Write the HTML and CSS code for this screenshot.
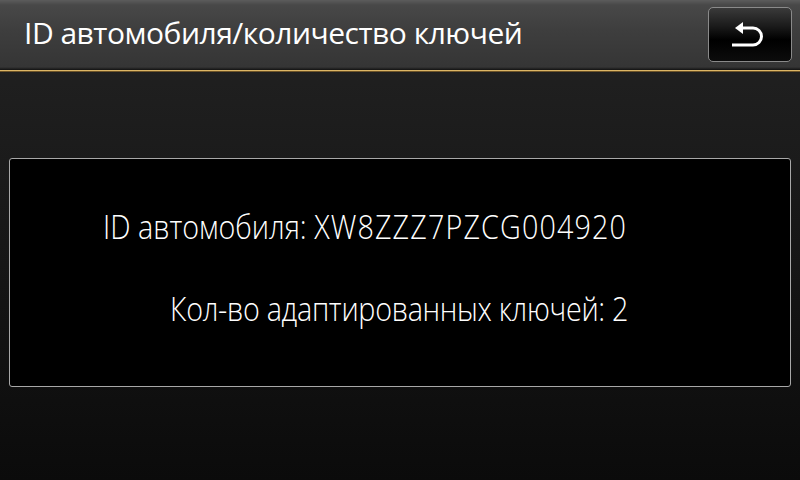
FILE: index.html
```html
<!DOCTYPE html>
<html lang="ru">
<head>
<meta charset="utf-8">
<link rel="stylesheet" href="styles.css">
</head>
<body>
<div class="screen">
  <header class="header">
    <h1 class="title">ID автомобиля/количество ключей</h1>
    <button class="back" type="button" aria-label="Назад">
      <svg width="40" height="26" viewBox="0 0 40 26">
        <path d="M10 6 H22 A8.5 8.5 0 0 1 22 23 H1" fill="none" stroke="#fff" stroke-width="3"/>
        <path d="M4 6 L12 0 L12 12 Z" fill="#fff"/>
      </svg>
    </button>
  </header>
  <div class="rule"></div>
  <main class="content">
    <section class="panel">
      <p class="line line-id"><span class="narrow">ID автомобиля: <span class="code">XW8ZZZ7PZCG004920</span></span></p>
      <p class="line line-keys"><span class="narrow keys">Кол-во адаптированных ключей: 2</span></p>
    </section>
  </main>
</div>
</body>
</html>
```
FILE: styles.css
```css
html, body {
  margin: 0;
  padding: 0;
  width: 800px;
  height: 480px;
  overflow: hidden;
  background: #0b0b0b;
}
.screen {
  width: 800px;
  height: 480px;
  display: flex;
  flex-direction: column;
  font-family: "Open Sans", "Liberation Sans", sans-serif;
  color: #fff;
  background: linear-gradient(to bottom, #232323 0%, #161616 55%, #0b0b0b 100%);
}
.header {
  height: 70px;
  box-sizing: border-box;
  display: flex;
  align-items: flex-start;
  justify-content: space-between;
  padding: 7px 8px 0 24px;
  background: linear-gradient(to bottom, #5c5c5c 0px, #484848 5px, #3e3e3e 30px, #353535 67px, #1e1e1e 69px, #111 70px);
}
.title {
  margin: 0;
  padding-top: 8px;
  font-weight: normal;
  font-size: 30px;
  line-height: 36px;
  letter-spacing: -0.5px;
}
.back {
  width: 84px;
  height: 55px;
  box-sizing: border-box;
  border: 1px solid #8a8a8a;
  border-radius: 5px;
  background: linear-gradient(to bottom, #3a3a3a 0%, #1a1a1a 35%, #000 60%, #0c0c0c 100%);
  display: flex;
  align-items: center;
  justify-content: center;
  padding: 0 0 0 2px;
}
.back svg { display: block; }
.rule {
  height: 2px;
  background: linear-gradient(to bottom, #dcb666 0, #dcb666 1px, #6e5428 1px, #6e5428 2px);
}
.content {
  flex: 1;
  padding: 86px 9px 0 9px;
}
.panel {
  height: 229px;
  box-sizing: border-box;
  border: 1px solid #a8a8a8;
  border-radius: 3px;
  background: #000;
  display: flex;
  flex-direction: column;
  padding: 48px 0 0 0;
}
.line {
  margin: 0;
  font-size: 33px;
  line-height: 40px;
  font-weight: 300;
  white-space: nowrap;
}
.narrow {
  display: inline-block;
  transform: scaleX(0.87);
  transform-origin: 0 50%;
}
.line-id { padding-left: 93px; }
.code { letter-spacing: 1.3px; }
.line-keys { padding-left: 160px; margin-top: 42px; }
.keys { letter-spacing: -0.33px; }
```
